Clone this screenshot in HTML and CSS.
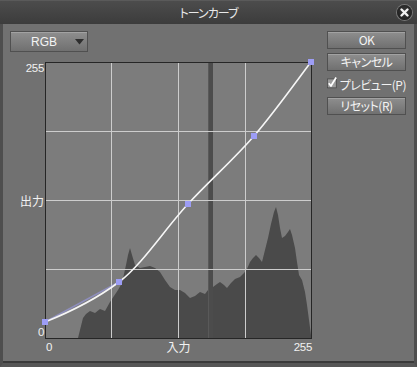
FILE: index.html
```html
<!DOCTYPE html>
<html lang="ja">
<head>
<meta charset="utf-8">
<title>トーンカーブ</title>
<link rel="stylesheet" href="styles.css">
</head>
<body>
<div class="dialog">
  <div class="titlebar">
    <span class="title">トーンカーブ</span>
    <span class="close">
      <svg width="15" height="15" viewBox="0 0 15 15"><path d="M4.5 4.5 L10.5 10.5 M10.5 4.5 L4.5 10.5" stroke="#f2f2f2" stroke-width="2.4" stroke-linecap="round"/></svg>
    </span>
  </div>
  <div class="body">
    <div class="left">
      <div class="select">
        <span class="select-text">RGB</span>
        <svg class="select-arrow" width="9" height="6" viewBox="0 0 9 6"><path d="M0 0 H9 L4.5 5.5 Z" fill="#2e2e2e"/></svg>
      </div>
      <div class="chart">
        <div class="ylabels"><span class="num">255</span><span>出力</span><span class="num">0</span></div>
        <svg class="plot" width="267" height="277" viewBox="0 0 267 277">
          <rect x="0" y="0" width="267" height="277" fill="#7c7c7c"/>
          <polygon fill="#4a4a4a" points="33,276 35,268 38,256 41,252 45,249 50,251 55,247 60,249 65,240 69,234 73,228 77,221 81,203 83,193 85,186 87,193 90,203 95,206 100,205 105,204 110,206 115,210 120,218 125,225 130,228 135,228 140,231 145,236 150,234 155,230 160,232 163,228 168,225 172,222 175,220 179,223 182,226 186,221 190,217 195,215 199,211 202,207 205,200 208,196 211,193 214,196 217,200 220,188 223,176 226,162 229,150 231,145 233,153 235,166 237,176 240,174 243,170 245,167 247,173 250,186 252,200 254,213 257,218 260,230 262,243 264,258 266,273 266,276"/>
          <rect x="163" y="1" width="5" height="275" fill="#4c4c4c"/>
          <rect x="163" y="1" width="1" height="275" fill="#595959"/>
          <g stroke="#cdcdcd" stroke-width="1">
            <line x1="66.5" y1="1" x2="66.5" y2="276"/>
            <line x1="133.5" y1="1" x2="133.5" y2="276"/>
            <line x1="200.5" y1="1" x2="200.5" y2="276"/>
            <line x1="1" y1="69.5" x2="266" y2="69.5"/>
            <line x1="1" y1="138.5" x2="266" y2="138.5"/>
            <line x1="1" y1="207.5" x2="266" y2="207.5"/>
          </g>
          <rect x="0.5" y="0.5" width="266" height="276" fill="none" stroke="#262626"/>
          <line x1="0" y1="260" x2="74" y2="220" stroke="#9c9cf0" stroke-opacity="0.55" stroke-width="1.5"/>
          <path d="M0,260 C24.7,250.1 49.3,238.5 74,220 C97,202.8 120,166.8 143,142 C165.5,117.7 188.5,97.7 209,74 C229.5,50.3 256.5,12.3 266,0" fill="none" stroke="#f6f6f6" stroke-width="1.6"/>
          <g fill="#9d9df5">
            <rect x="-3" y="257" width="6" height="6"/>
            <rect x="71" y="217" width="6" height="6"/>
            <rect x="140" y="139" width="6" height="6"/>
            <rect x="206" y="71" width="6" height="6"/>
            <rect x="263" y="-3" width="6" height="6"/>
          </g>
        </svg>
        <div class="xlabels"><span class="num x0">0</span><span>入力</span><span class="num x255">255</span></div>
      </div>
    </div>
    <div class="right">
      <div class="btn">OK</div>
      <div class="btn">キャンセル</div>
      <div class="check">
        <svg class="checkbox" width="15" height="17" viewBox="0 0 15 17">
          <rect x="0.5" y="3.5" width="12.5" height="12.5" fill="#9c9c9c" stroke="#454545"/>
          <path d="M2.5 9.5 L5.5 13.5 L12.8 1.5" fill="none" stroke="#ffffff" stroke-width="2.4" stroke-linejoin="round"/>
        </svg>
        <span>プレビュー(P)</span>
      </div>
      <div class="btn">リセット(R)</div>
    </div>
  </div>
</div>
</body>
</html>
```
FILE: styles.css
```css
html, body {
  margin: 0;
  padding: 0;
  background: #4a4a4a;
}

.dialog {
  width: 417px;
  height: 367px;
  box-sizing: border-box;
  display: flex;
  flex-direction: column;
  background: #717171;
  border-left: 3px solid #4e4e4e;
  border-right: 3px solid #4e4e4e;
  border-bottom: 4px solid #565656;
  font-family: "Noto Sans CJK JP", "Liberation Sans", sans-serif;
  font-feature-settings: "palt";
  color: #f2f2f2;
  font-size: 12px;
}

.titlebar {
  height: 24px;
  margin: 0 -3px;
  display: grid;
  grid-template-columns: 1fr auto 1fr;
  align-items: center;
  background: linear-gradient(#4c4c4c, #3c3c3c);
  border-top: 1px solid #5a5a5a;
  box-sizing: border-box;
}

.title {
  grid-column: 2;
  font-size: 12px;
  letter-spacing: -1px;
  color: #e8e8e8;
  line-height: 14px;
}

.close {
  grid-column: 3;
  justify-self: end;
  margin-right: 5px;
  width: 15px;
  height: 15px;
  border-radius: 50%;
  background: radial-gradient(circle at 50% 40%, #3a3a3a, #161616);
  box-shadow: 0 0 0 1px #777;
  display: flex;
}

.body {
  flex: 1;
  display: flex;
  padding: 7px 8px 0 7px;
  border-bottom: 2px solid #3a3a3a;
}

.left {
  width: 302px;
  display: flex;
  flex-direction: column;
}

.btn, .select {
  box-sizing: border-box;
  border: 1px solid #505050;
  background: linear-gradient(#8e8e8e, #707070);
  box-shadow: inset 0 1px 0 #a2a2a2;
  color: #f4f4f4;
}

.select {
  width: 78px;
  height: 21px;
  display: flex;
  align-items: center;
  padding: 0 3px 0 0;
  margin-bottom: 10px;
}

.select-text {
  flex: 1;
  text-align: center;
  font-family: "Liberation Sans", sans-serif;
  font-size: 12px;
  padding-left: 2px;
}

.select-arrow {
  display: block;
}

.chart {
  display: grid;
  grid-template-columns: 35px 267px;
  grid-template-rows: 277px auto;
}

.ylabels {
  display: flex;
  flex-direction: column;
  justify-content: space-between;
  align-items: flex-end;
  padding-right: 1px;
  line-height: 13px;
}

.num {
  font-family: "Liberation Sans", sans-serif;
  font-size: 11.5px;
  letter-spacing: -0.3px;
}

.plot {
  display: block;
  overflow: visible;
}

.xlabels {
  grid-column: 2;
  display: grid;
  grid-template-columns: 1fr auto 1fr;
  line-height: 14px;
  margin-top: 1px;
}

.x0 {
  justify-self: start;
  padding-left: 1px;
}

.x255 {
  justify-self: end;
}

.right {
  width: 79px;
  margin-left: 15px;
  display: flex;
  flex-direction: column;
  gap: 4px;
}

.btn {
  height: 18px;
  display: flex;
  align-items: center;
  justify-content: center;
  font-size: 12px;
  letter-spacing: -0.5px;
  line-height: 14px;
}

.check {
  height: 18px;
  display: flex;
  align-items: center;
  gap: 2px;
  letter-spacing: -0.5px;
  white-space: nowrap;
}

.checkbox {
  display: block;
  margin-top: -3px;
}
```
